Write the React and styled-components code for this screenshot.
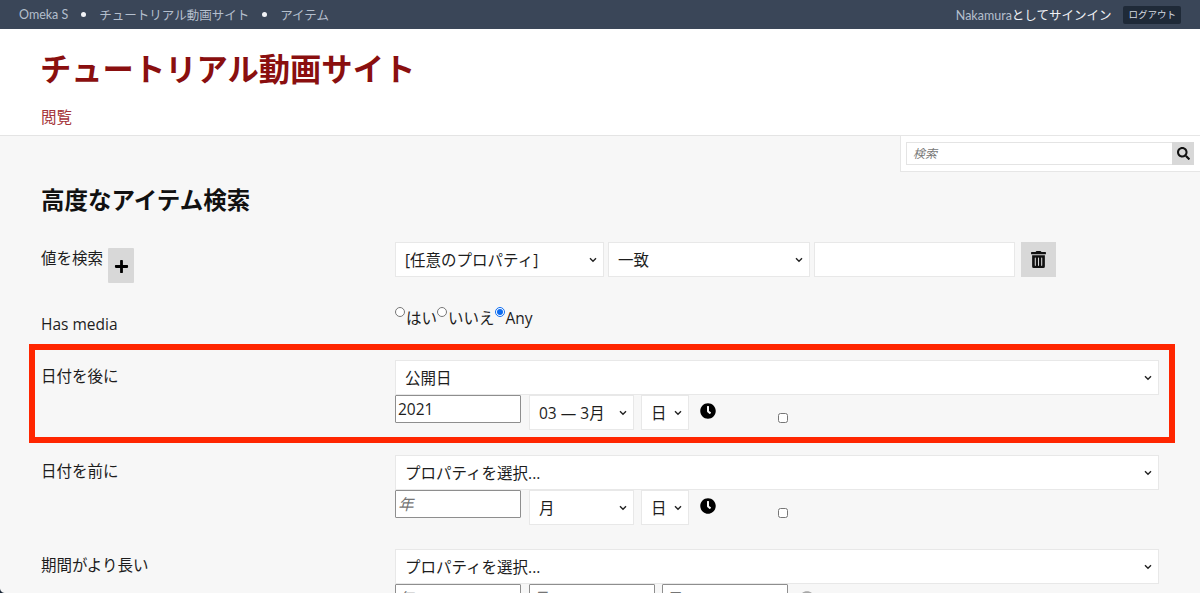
import React from "react";
import styled, { createGlobalStyle } from "styled-components";
import { FaPlus, FaTrashAlt, FaClock, FaSearch } from "react-icons/fa";

const CJK = '"Noto Sans CJK JP"';
const chevron =
  "url(\"data:image/svg+xml,%3Csvg xmlns='http://www.w3.org/2000/svg' width='8' height='6' viewBox='0 0 8 6'%3E%3Cpath d='M1 1.3l3 3 3-3' fill='none' stroke='%23222' stroke-width='1.4'/%3E%3C/svg%3E\")";

const GlobalStyle = createGlobalStyle`
  html, body {
    margin: 0;
    padding: 0;
    height: 593px;
    overflow: hidden;
    background: #f7f7f7;
  }
  * { box-sizing: border-box; }
`;

const Page = styled.div`
  position: relative;
  width: 1200px;
  height: 593px;
  overflow: hidden;
  background: #f7f7f7;
  color: #1d1d1d;
  font-family: "Open Sans", ${CJK}, sans-serif;
  font-size: 15.5px;
`;

const TopBar = styled.div`
  height: 29px;
  background: #3a4658;
  display: flex;
  align-items: center;
  justify-content: space-between;
  padding: 0 19px;
  font-family: Lato, ${CJK}, sans-serif;
  font-size: 12.5px;
  color: #b4bfcd;
`;

const Crumbs = styled.div`
  display: flex;
  align-items: center;
  gap: 13px;
`;

const Dot = styled.span`
  width: 5px;
  height: 5px;
  border-radius: 50%;
  background: #f2f4f7;
`;

const User = styled.div`
  display: flex;
  align-items: center;
  gap: 12px;
`;

const UserName = styled.span`
  color: #f0f2f5;
  b {
    font-weight: 400;
    color: #b4bfcd;
  }
`;

const Logout = styled.span`
  background: #1f2a38;
  color: #d5dae1;
  font-size: 9.5px;
  line-height: 18px;
  height: 18px;
  padding: 0 5px;
  border-radius: 2px;
`;

const Header = styled.header`
  height: 107px;
  background: #fff;
  border-bottom: 1px solid #e4e4e4;
  padding: 16px 40px 0 41px;
`;

const SiteTitle = styled.h1`
  margin: 0 0 0 -1px;
  font-family: ${CJK}, sans-serif;
  font-size: 31.3px;
  line-height: 46px;
  font-weight: 700;
  color: #8a0f0f;
`;

const NavLink = styled.a`
  display: block;
  margin-top: 15px;
  font-size: 15.5px;
  line-height: 22px;
  color: #a5353a;
`;

const SearchBox = styled.div`
  position: absolute;
  left: 900px;
  top: 135px;
  width: 300px;
  height: 37px;
  background: #fff;
  border: 1px solid #e6e6e6;
  border-right: 0;
  padding: 6px 6px 0 5px;
  display: flex;
`;

const SearchInput = styled.input`
  flex: 1;
  min-width: 0;
  height: 23px;
  border: 1px solid #e4e4e4;
  border-right: 0;
  background: #fff;
  padding: 0 6px;
  font-family: "Open Sans", ${CJK}, sans-serif;
  font-size: 12px;
  &::placeholder {
    font-style: italic;
    color: #777;
  }
`;

const SearchButton = styled.span`
  width: 22px;
  height: 23px;
  background: #d8d8d8;
  display: flex;
  align-items: center;
  justify-content: center;
  font-size: 13px;
  color: #111;
`;

const Main = styled.main`
  padding: 45px 41px 0;
`;

const Heading = styled.h2`
  margin: 0 0 25px;
  font-family: ${CJK}, sans-serif;
  font-size: 23.5px;
  line-height: 36px;
  font-weight: 700;
  color: #111;
`;

const Row = styled.div`
  display: flex;
  margin-bottom: ${(p) => p.$gap}px;
`;

const LabelCol = styled.div`
  width: 354px;
  flex: none;
  display: flex;
  align-items: flex-start;
  padding-top: ${(p) => p.$top}px;
`;

const Label = styled.label`
  font-size: 15.5px;
  line-height: 21px;
`;

const AddButton = styled.span`
  width: 26px;
  height: 35px;
  margin: 0 0 0 5px;
  background: #d8d8d8;
  border-radius: 1px;
  display: flex;
  align-items: center;
  justify-content: center;
  padding-top: 1px;
  font-size: 15px;
  color: #000;
`;

const Field = styled.div`
  width: 764px;
  flex: none;
`;

const Line = styled.div`
  display: flex;
  align-items: flex-start;
`;

const Select = styled.select`
  appearance: none;
  width: ${(p) => p.$w}px;
  height: 35px;
  margin-right: ${(p) => p.$mr || 0}px;
  flex: none;
  background: #fff ${chevron} no-repeat right 6px center;
  border: 1px solid #e8e8e8;
  border-radius: 0;
  padding: 0 0 0 9px;
  font-family: "Open Sans", ${CJK}, sans-serif;
  font-size: 15.5px;
  color: #1d1d1d;
`;

const TextInput = styled.input`
  width: 201px;
  height: 35px;
  margin: 0 6px 0 4px;
  background: #fff;
  border: 1px solid #e8e8e8;
`;

const TrashButton = styled.span`
  width: 35px;
  height: 35px;
  background: #d8d8d8;
  display: flex;
  align-items: center;
  justify-content: center;
  font-size: 17px;
  color: #111;
`;

const Radios = styled.div`
  display: flex;
  align-items: flex-start;
  height: 24px;
  font-size: 15.5px;
  line-height: 21px;
`;

const RadioItem = styled.label`
  display: flex;
  align-items: flex-start;
  padding-top: 5px;
  input {
    width: 10px;
    height: 10px;
    margin: 0 1px 0 0;
    accent-color: #0b6bf0;
  }
  span {
    margin-top: 1px;
  }
`;

const YearInput = styled.input`
  width: 126px;
  height: 28px;
  margin-right: ${(p) => p.$mr ?? 8}px;
  flex: none;
  background: #fff;
  border: 1px solid #8e8e8e;
  border-radius: 1px;
  padding: 0 2px;
  font-family: "Open Sans", ${CJK}, sans-serif;
  font-size: 15.5px;
  color: #1d1d1d;
  &::placeholder {
    font-style: italic;
    color: #757575;
  }
`;

const ClockIcon = styled.span`
  display: flex;
  margin: 8px 0 0 11px;
  font-size: 16px;
  color: #000;
`;

const FadedClock = styled(ClockIcon)`
  margin: 7px 0 0 3px;
  color: #a8a8a8;
`;

const TimeCheck = styled.input`
  width: 10px;
  height: 10px;
  margin: 18px 0 0 62px;
  flex: none;
`;

const DateLine = ({ year, month }) => (
  <Line>
    <YearInput defaultValue={year} placeholder="年" />
    <Select $w={105} $mr={7} defaultValue={month}>
      <option>{month}</option>
    </Select>
    <Select $w={48}>
      <option>日</option>
    </Select>
    <ClockIcon>
      <FaClock />
    </ClockIcon>
    <TimeCheck type="checkbox" />
  </Line>
);

const Highlight = styled.div`
  position: absolute;
  left: 29px;
  top: 344px;
  width: 1146px;
  height: 99px;
  border: 6px solid #ff2600;
  pointer-events: none;
`;

// rounded window corner that shows in the bottom left of the screenshot
const WindowCorner = styled.div`
  position: absolute;
  left: 0;
  bottom: 0;
  width: 5px;
  height: 5px;
  background: radial-gradient(circle at 100% 0, transparent 4.5px, #1d2a3a 5.5px);
`;

const App = () => (
  <Page>
    <GlobalStyle />
    <TopBar>
      <Crumbs>
        <span>Omeka S</span>
        <Dot />
        <span>チュートリアル動画サイト</span>
        <Dot />
        <span>アイテム</span>
      </Crumbs>
      <User>
        <UserName>
          <b>Nakamura</b>としてサインイン
        </UserName>
        <Logout>ログアウト</Logout>
      </User>
    </TopBar>
    <Header>
      <SiteTitle>チュートリアル動画サイト</SiteTitle>
      <NavLink>閲覧</NavLink>
    </Header>
    <SearchBox>
      <SearchInput placeholder="検索" />
      <SearchButton>
        <FaSearch />
      </SearchButton>
    </SearchBox>
    <Main>
      <Heading>高度なアイテム検索</Heading>
      <Row $gap={19}>
        <LabelCol $top={6}>
          <Label>値を検索</Label>
          <AddButton>
            <FaPlus />
          </AddButton>
        </LabelCol>
        <Field>
          <Line>
            <Select $w={209} $mr={4}>
              <option>[任意のプロパティ]</option>
            </Select>
            <Select $w={202}>
              <option>一致</option>
            </Select>
            <TextInput />
            <TrashButton>
              <FaTrashAlt />
            </TrashButton>
          </Line>
        </Field>
      </Row>
      <Row $gap={25}>
        <LabelCol $top={12}>
          <Label>Has media</Label>
        </LabelCol>
        <Radios>
          <RadioItem>
            <input type="radio" name="media" />
            <span>はい</span>
          </RadioItem>
          <RadioItem>
            <input type="radio" name="media" />
            <span>いいえ</span>
          </RadioItem>
          <RadioItem>
            <input type="radio" name="media" defaultChecked />
            <span>Any</span>
          </RadioItem>
        </Radios>
      </Row>
      <Row $gap={25}>
        <LabelCol $top={6}>
          <Label>日付を後に</Label>
        </LabelCol>
        <Field>
          <Select $w={764}>
            <option>公開日</option>
          </Select>
          <DateLine year="2021" month="03 — 3月" />
        </Field>
      </Row>
      <Row $gap={24}>
        <LabelCol $top={6}>
          <Label>日付を前に</Label>
        </LabelCol>
        <Field>
          <Select $w={764}>
            <option>プロパティを選択...</option>
          </Select>
          <DateLine month="月" />
        </Field>
      </Row>
      <Row $gap={0}>
        <LabelCol $top={6}>
          <Label>期間がより長い</Label>
        </LabelCol>
        <Field>
          <Select $w={764}>
            <option>プロパティを選択...</option>
          </Select>
          <Line>
            <YearInput placeholder="年" />
            <YearInput $mr={7} placeholder="月" />
            <YearInput placeholder="日" />
            <FadedClock>
              <FaClock />
            </FadedClock>
          </Line>
        </Field>
      </Row>
    </Main>
    <Highlight />
    <WindowCorner />
  </Page>
);

export default App;
